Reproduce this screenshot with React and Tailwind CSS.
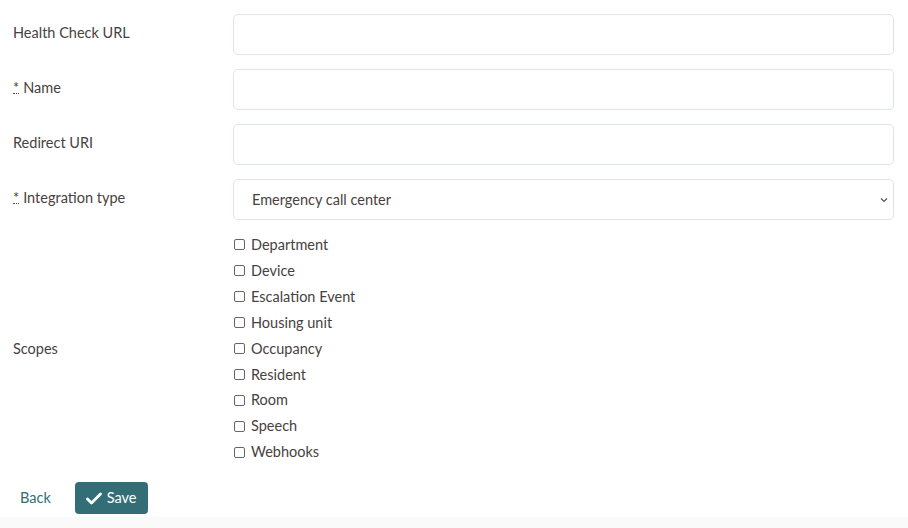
import React from "react";

const scopes = ["Department","Device","Escalation Event","Housing unit","Occupancy","Resident","Room","Speech","Webhooks"];

function Label({ req, children, up = true }) {
  return (
    <div className={"w-[220px] shrink-0 text-[14.5px] text-[#483f40] " + (up ? "pb-[4px]" : "")}>
      {req && <span className="border-b border-dotted border-[#483f40] leading-[10px] inline-block mr-[4px]">*</span>}
      {children}
    </div>
  );
}

function Field({ label, req }) {
  return (
    <div className="flex items-center h-[41px] mb-[14px]">
      <Label req={req}>{label}</Label>
      <input className="flex-1 h-[41px] rounded-[5px] border border-[#dfe3ee] bg-white outline-none" />
    </div>
  );
}

export default function App() {
  return (
    <div className="w-[908px] h-[528px] bg-[#fafafa]" style={{ fontFamily: "Lato, 'Noto Sans', sans-serif" }}>
      <div className="bg-white pl-[13px] pr-[14px] pt-[14px] pb-[3px]">
        <Field label="Health Check URL" />
        <Field label="Name" req />
        <Field label="Redirect URI" />
        <div className="flex items-center h-[41px] mb-[12px] mt-[1px]">
          <Label req>Integration type</Label>
          <div className="flex-1 h-[41px] rounded-[5px] border border-[#dfe3ee] bg-white flex items-center pl-[18px] pr-[4px] justify-between">
            <span className="text-[14.5px] text-[#483f40]">Emergency call center</span>
            <svg width="10" height="10" viewBox="0 0 10 10"><path d="M2 3.5 L5 6.5 L8 3.5" fill="none" stroke="#555" strokeWidth="1.2" /></svg>
          </div>
        </div>
        <div className="flex items-center mb-[17px]">
          <Label up={false}>Scopes</Label>
          <div className="flex flex-col">
            {scopes.map((s) => (
              <label key={s} className="flex items-center h-[25.9px] text-[14.5px] text-[#483f40]">
                <span className="w-[11px] h-[11px] border border-[#666] rounded-[2px] ml-[1px] mr-[6px] bg-white" />
                {s}
              </label>
            ))}
          </div>
        </div>
        <div className="flex items-center">
          <a className="text-[14.5px] text-[#336e76] ml-[7px] mr-[24px]">Back</a>
          <button className="flex items-center h-[32px] px-[11px] rounded-[4px] bg-[#336e76] text-white text-[14.5px]">
            <svg width="16" height="13" viewBox="0 0 16 13" className="mr-[5px]"><path d="M1.5 7 L5.5 11 L14.5 2" fill="none" stroke="white" strokeWidth="2.8" strokeLinecap="round" strokeLinejoin="round" /></svg>
            Save
          </button>
        </div>
      </div>
    </div>
  );
}
